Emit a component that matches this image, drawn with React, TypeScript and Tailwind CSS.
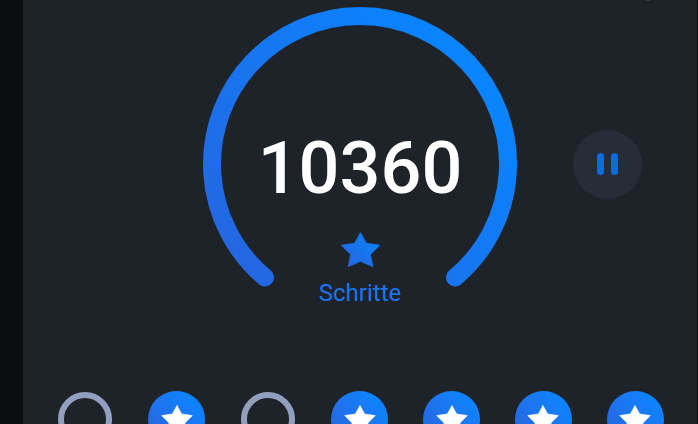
const days = [
    { name: "Montag", reached: false },
    { name: "Dienstag", reached: true },
    { name: "Mittwoch", reached: false },
    { name: "Donnerstag", reached: true },
    { name: "Freitag", reached: true },
    { name: "Samstag", reached: true },
    { name: "Sonntag", reached: true },
]

function Star({ className, fill }: { className: string; fill: string }) {
    return (
        <svg viewBox="0 0 38 34" className={className} fill={fill} aria-hidden="true">
            <defs>
                <linearGradient id="starFill" x1="0" y1="1" x2="1" y2="0">
                    <stop offset="0.1" stopColor="#2566e0" />
                    <stop offset="0.8" stopColor="#0e80f8" />
                </linearGradient>
            </defs>
            <path
                d="M19 .6 24.6 10.9 37.6 12.9 28.6 21.8 31 33.7 19 28.5 7 33.7 9.4 21.8 .4 12.9 13.4 10.9Z"
                stroke={fill}
                strokeWidth="0.8"
                strokeLinejoin="round"
            />
        </svg>
    )
}

function StepRing({ steps }: { steps: number }) {
    return (
        <div className="relative h-[314px] w-[314px]">
            <svg viewBox="0 0 314 314" className="h-full w-full" fill="none" aria-hidden="true">
                <defs>
                    <linearGradient id="ring" gradientUnits="userSpaceOnUse" x1="20" y1="260" x2="250" y2="40">
                        <stop offset="0" stopColor="#2566e0" />
                        <stop offset="1" stopColor="#0a84ff" />
                    </linearGradient>
                </defs>
                <path d="M62 270.5A148 148 0 1 1 252 270.5" stroke="url(#ring)" strokeWidth="18" strokeLinecap="round" />
            </svg>
            <div className="absolute inset-0 flex flex-col items-center pt-[126px]">
                <span className="text-[72px] leading-[72px] font-medium text-white">{steps}</span>
                <Star className="mt-[27px] h-[35px] w-[39px]" fill="url(#starFill)" />
                <span className="mt-3 text-[24px] leading-7 text-[#1877f0]">Schritte</span>
            </div>
        </div>
    )
}

function App() {
    return (
        <div className="flex h-screen overflow-hidden bg-[#0c0d11] font-['Roboto',sans-serif]">
            <div className="w-[23px] shrink-0"></div>

            <main className="relative mr-px flex-1 bg-[#1e2229] pt-[7px]">
                <div className="absolute top-0 right-[47px] h-px w-1 bg-[#3c3f46]"></div>

                <section className="grid grid-cols-[1fr_auto_1fr] items-center">
                    <div></div>
                    <StepRing steps={10360} />
                    <button
                        type="button"
                        aria-label="Pause"
                        className="flex h-[69px] w-[69px] items-center justify-center gap-[7px] justify-self-center rounded-full bg-[#272d38]"
                    >
                        <span className="h-[22px] w-[7px] rounded-full bg-[#0c6cd9]"></span>
                        <span className="h-[22px] w-[7px] rounded-full bg-[#0c6cd9]"></span>
                    </button>
                </section>

                <ul className="mt-[70px] grid grid-cols-7 px-4">
                    {days.map((day) => (
                        <li key={day.name} aria-label={day.name} className="flex h-14 items-center justify-center">
                            {day.reached ? (
                                <div className="flex h-[57px] w-[57px] items-center justify-center rounded-full bg-linear-to-tr from-[#2566e0] from-15% to-[#0a84ff] to-85%">
                                    <Star className="h-7 w-8" fill="#fff" />
                                </div>
                            ) : (
                                <div className="h-[54px] w-[54px] rounded-full border-6 border-[#929fbf]"></div>
                            )}
                        </li>
                    ))}
                </ul>
            </main>
        </div>
    )
}

export default App;
